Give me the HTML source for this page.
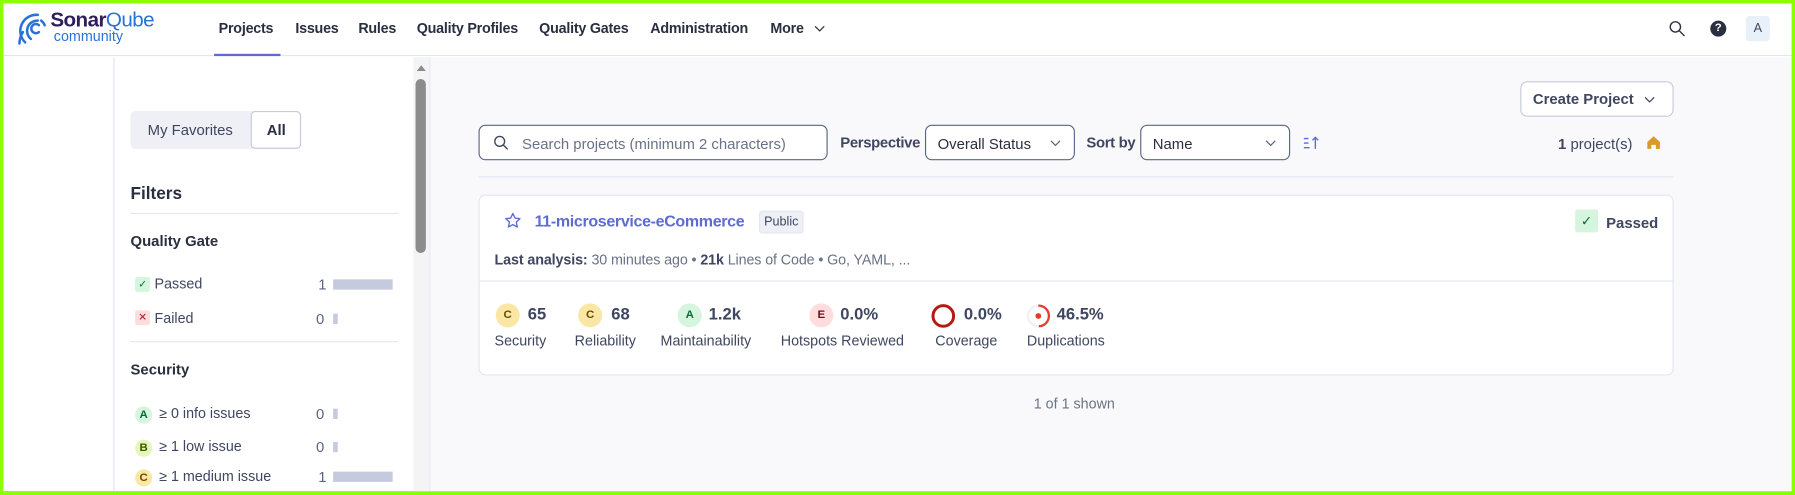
<!DOCTYPE html>
<html><head><meta charset="utf-8"><style>
*{box-sizing:border-box;margin:0;padding:0}
html,body{width:1795px;height:495px;overflow:hidden;background:#8aff00}
#w{position:absolute;left:0;top:0;width:1568px;height:432px;transform:scale(1.14477);transform-origin:0 0;font-family:"Liberation Sans",Arial,sans-serif;color:#2a2f40;}
.in{position:absolute;left:3px;top:3px;right:3px;bottom:3px;background:#fff;overflow:hidden}
.a{position:absolute;white-space:nowrap}
.nav{font-size:12.5px;font-weight:bold;color:#2a2f40;top:15px;letter-spacing:-0.2px}
.t13{font-size:13px}
.bar{position:absolute;height:9px;background:#c5cbdc}
.g{font-size:12.5px;color:#3f4660}
.cnt{font-size:13px;color:#5b6586}
.sel{position:absolute;border:1px solid #5b6586;border-radius:6px;background:#fff;height:31px;font-size:13px;padding:8px 10px}
.rate{position:absolute;width:21px;height:21px;border-radius:50%;font-size:10px;font-weight:bold;text-align:center;line-height:21px}
.mv{font-size:14.5px;font-weight:bold;color:#3f4660}
.ml{font-size:12.5px;color:#3f4660}
</style></head><body><div id="w"><div class="in">
<!-- header -->
<div class="a" style="left:0;top:0;width:1562px;height:46px;border-bottom:1px solid #e1e6f3;background:#fff"></div>
<svg class="a" style="left:10px;top:6px" width="32" height="32" viewBox="0 0 32 32" fill="none" stroke="#2a73d6" stroke-width="2.2" stroke-linecap="round"><path d="M21 13a4 4 0 1 0 0 6"/><path d="M14 25a9 9 0 0 1 6-16"/><path d="M9 28a14 14 0 0 1 11-24"/><path d="M4 29a19 19 0 0 1 3-10"/><path d="M23 9a9 9 0 0 1 3 4"/></svg>
<div class="a" style="left:41px;top:4px;font-size:18px;font-weight:bold;color:#2e1e5b;letter-spacing:-0.5px">Sonar<span style="color:#2a73d6;font-weight:normal">Qube</span></div>
<div class="a" style="left:44px;top:22px;font-size:12.5px;color:#2a73d6">community</div>
<div class="a nav" style="left:188px">Projects</div>
<div class="a" style="left:184px;top:44px;width:58px;height:2px;background:#5d6cd0"></div>
<div class="a nav" style="left:255px">Issues</div>
<div class="a nav" style="left:310px">Rules</div>
<div class="a nav" style="left:361px">Quality Profiles</div>
<div class="a nav" style="left:468px">Quality Gates</div>
<div class="a nav" style="left:565px">Administration</div>
<div class="a nav" style="left:670px">More</div>
<svg class="a" style="left:708px;top:18px" width="10" height="8"><path d="M1 2l4 4 4-4" stroke="#2a2f40" fill="none" stroke-width="1.1"/></svg>
<svg class="a" style="left:1455px;top:15px" width="14" height="14" fill="none" stroke="#2a2f40" stroke-width="1.2"><circle cx="5.5" cy="5.5" r="4.5"/><path d="M9 9l4.5 4.5"/></svg>
<div class="a" style="left:1491px;top:15px;width:14px;height:14px;border-radius:50%;background:#2a2f40;color:#fff;font-size:10px;font-weight:bold;text-align:center;line-height:14px">?</div>
<div class="a" style="left:1522px;top:11px;width:21px;height:22px;border-radius:3px;background:#e8f0f9;font-size:11px;text-align:center;line-height:22px;color:#3f4660">A</div>
<!-- sidebar -->
<div class="a" style="left:96px;top:47px;width:1px;height:400px;background:#e1e6f3"></div>
<div class="a" style="left:372px;top:47px;width:1px;height:400px;background:#e1e6f3"></div>
<div class="a" style="left:373px;top:47px;width:1200px;height:400px;background:#f9f9fb"></div>
<div class="a" style="left:358px;top:47px;width:14px;height:400px;background:#f4f4f4"></div>
<div class="a" style="left:361px;top:54px;width:0;height:0;border-left:4px solid transparent;border-right:4px solid transparent;border-bottom:5px solid #8c8c8c"></div>
<div class="a" style="left:360px;top:66px;width:9px;height:152px;border-radius:5px;background:#8c8c8c"></div>
<div class="a" style="left:111px;top:94px;width:149px;height:33px;border-radius:4px;background:#eef0f6"></div>
<div class="a t13" style="left:126px;top:103px;color:#3f4660">My Favorites</div>
<div class="a" style="left:216px;top:94px;width:44px;height:33px;border-radius:4px;background:#fff;border:1px solid #c5cbdc"></div>
<div class="a t13" style="left:230px;top:103px;font-weight:bold">All</div>
<div class="a" style="left:111px;top:158px;font-size:15px;font-weight:bold">Filters</div>
<div class="a" style="left:111px;top:183px;width:234px;height:1px;background:#e1e6f3"></div>
<div class="a t13" style="left:111px;top:200px;font-weight:bold">Quality Gate</div>
<div class="a" style="left:115px;top:239px;width:13px;height:13px;border-radius:2px;background:#d6f5de;color:#0b6b35;font-size:9px;text-align:center;line-height:13px">✓</div>
<div class="a g" style="left:132px;top:238px">Passed</div>
<div class="a cnt" style="left:275px;top:238px">1</div><div class="bar" style="left:288px;top:241px;width:52px"></div>
<div class="a" style="left:115px;top:268px;width:13px;height:13px;border-radius:2px;background:#fdd;color:#a8192f;font-size:9px;text-align:center;line-height:13px">✕</div>
<div class="a g" style="left:132px;top:268px">Failed</div>
<div class="a cnt" style="left:273px;top:268px">0</div><div class="bar" style="left:288px;top:271px;width:4px"></div>
<div class="a" style="left:111px;top:295px;width:234px;height:1px;background:#e1e6f3"></div>
<div class="a t13" style="left:111px;top:312px;font-weight:bold">Security</div>
<div class="rate" style="left:115px;top:352px;width:15px;height:15px;line-height:15px;background:#d6f5de;color:#0b6b35">A</div>
<div class="a g" style="left:136px;top:351px">≥ 0 info issues</div>
<div class="a cnt" style="left:273px;top:351px">0</div><div class="bar" style="left:288px;top:354px;width:4px"></div>
<div class="rate" style="left:115px;top:381px;width:15px;height:15px;line-height:15px;background:#e9f5b8;color:#3b5a06">B</div>
<div class="a g" style="left:136px;top:380px">≥ 1 low issue</div>
<div class="a cnt" style="left:273px;top:380px">0</div><div class="bar" style="left:288px;top:383px;width:4px"></div>
<div class="rate" style="left:115px;top:407px;width:15px;height:15px;line-height:15px;background:#fbe7a5;color:#6b4c00">C</div>
<div class="a g" style="left:136px;top:406px">≥ 1 medium issue</div>
<div class="a cnt" style="left:275px;top:406px">1</div><div class="bar" style="left:288px;top:409px;width:52px"></div>
<!-- main -->
<div class="a" style="left:1325px;top:68px;width:134px;height:31px;border:1px solid #c5cbdc;border-radius:6px;background:#fff"></div>
<div class="a t13" style="left:1336px;top:76px;font-weight:bold;color:#3f4660">Create Project</div>
<svg class="a" style="left:1433px;top:80px" width="10" height="8"><path d="M1 2l4 4 4-4" stroke="#3f4660" fill="none" stroke-width="1.1"/></svg>
<div class="a" style="left:415px;top:106px;width:305px;height:31px;border:1px solid #5b6586;border-radius:6px;background:#fff"></div>
<svg class="a" style="left:428px;top:115px" width="13" height="13" fill="none" stroke="#3f4660" stroke-width="1.2"><circle cx="5.5" cy="5.5" r="4.3"/><path d="M8.7 8.7l3.8 3.8"/></svg>
<div class="a t13" style="left:453px;top:115px;color:#6a7285">Search projects (minimum 2 characters)</div>
<div class="a t13" style="left:731px;top:114px;font-weight:bold;color:#3f4660;letter-spacing:-0.3px">Perspective</div>
<div class="sel" style="left:805px;top:106px;width:131px">Overall Status</div>
<svg class="a" style="left:914px;top:118px" width="10" height="8"><path d="M1 2l4 4 4-4" stroke="#5b6586" fill="none" stroke-width="1.1"/></svg>
<div class="a t13" style="left:946px;top:114px;font-weight:bold;color:#3f4660;letter-spacing:-0.3px">Sort by</div>
<div class="sel" style="left:993px;top:106px;width:131px">Name</div>
<svg class="a" style="left:1102px;top:118px" width="10" height="8"><path d="M1 2l4 4 4-4" stroke="#5b6586" fill="none" stroke-width="1.1"/></svg>
<svg class="a" style="left:1135px;top:116px" width="16" height="12" stroke="#5d6cd0" stroke-width="1.2" fill="none"><path d="M1 2h4M1 6h4M1 10h5M11 11V1M8.5 3.5L11 1l2.5 2.5"/></svg>
<div class="a t13" style="left:1358px;top:115px;color:#3f4660"><b>1</b> project(s)</div>
<svg class="a" style="left:1435px;top:115px" width="13" height="13"><path d="M1 6L6.5 1 12 6v6H8.5V8.5h-4V12H1z" fill="#d99a2b"/></svg>
<div class="a" style="left:415px;top:151px;width:1044px;height:1px;background:#e1e6f3"></div>
<div class="a" style="left:415px;top:167px;width:1044px;height:158px;border:1px solid #e1e6f3;border-radius:6px;background:#fff"></div>
<svg class="a" style="left:437px;top:182px" width="16" height="16" fill="none" stroke="#5d6cd0" stroke-width="1.2" stroke-linejoin="round"><path d="M8 1.5l1.9 4 4.3.5-3.2 3 .9 4.3L8 11.2l-3.9 2.1.9-4.3-3.2-3 4.3-.5z"/></svg>
<div class="a" style="left:464px;top:182px;font-size:14px;font-weight:bold;color:#5d6cd0;letter-spacing:-0.3px">11-microservice-eCommerce</div>
<div class="a" style="left:660px;top:181px;width:39px;height:20px;border:1px solid #e1e6f3;background:#eef0f6;border-radius:3px;font-size:11px;color:#3f4660;text-align:center;line-height:18px">Public</div>
<div class="a" style="left:1373px;top:180px;width:20px;height:20px;border-radius:2px;background:#d6f5de;color:#0b6b35;font-size:12px;text-align:center;line-height:20px">✓</div>
<div class="a t13" style="left:1400px;top:184px;font-weight:bold;color:#3f4660">Passed</div>
<div class="a" style="left:429px;top:217px;font-size:12.5px;color:#6a7285;letter-spacing:-0.1px"><b style="color:#3f4660">Last analysis:</b> 30 minutes ago • <b style="color:#3f4660">21k</b> Lines of Code • Go, YAML, ...</div>
<div class="a" style="left:416px;top:242px;width:1042px;height:1px;background:#e1e6f3"></div>
<div class="rate" style="left:430px;top:262px;background:#fbe7a5;color:#6b4c00">C</div><div class="a mv" style="left:458px;top:264px">65</div><div class="a ml" style="left:429px;top:288px">Security</div>
<div class="rate" style="left:502px;top:262px;background:#fbe7a5;color:#6b4c00">C</div><div class="a mv" style="left:531px;top:264px">68</div><div class="a ml" style="left:499px;top:288px">Reliability</div>
<div class="rate" style="left:589px;top:262px;background:#d6f5de;color:#0b6b35">A</div><div class="a mv" style="left:616px;top:264px">1.2k</div><div class="a ml" style="left:574px;top:288px">Maintainability</div>
<div class="rate" style="left:704px;top:262px;background:#fdd;color:#6b1020">E</div><div class="a mv" style="left:731px;top:264px">0.0%</div><div class="a ml" style="left:679px;top:288px">Hotspots Reviewed</div>
<svg class="a" style="left:810px;top:262px" width="22" height="22"><circle cx="11" cy="11" r="9" fill="none" stroke="#b51b12" stroke-width="2.6"/></svg><div class="a mv" style="left:839px;top:264px">0.0%</div><div class="a ml" style="left:814px;top:288px">Coverage</div>
<svg class="a" style="left:893px;top:262px" width="22" height="22"><circle cx="11" cy="11" r="9" fill="none" stroke="#eef0f6" stroke-width="2"/><path d="M11 2a9 9 0 0 1 0.5 18" fill="none" stroke="#e63b2e" stroke-width="2"/><circle cx="11" cy="11" r="2.5" fill="#e63b2e"/></svg><div class="a mv" style="left:920px;top:264px">46.5%</div><div class="a ml" style="left:894px;top:288px">Duplications</div>
<div class="a" style="left:900px;top:343px;font-size:12.5px;color:#6a7285">1 of 1 shown</div>
</div></div></body></html>
